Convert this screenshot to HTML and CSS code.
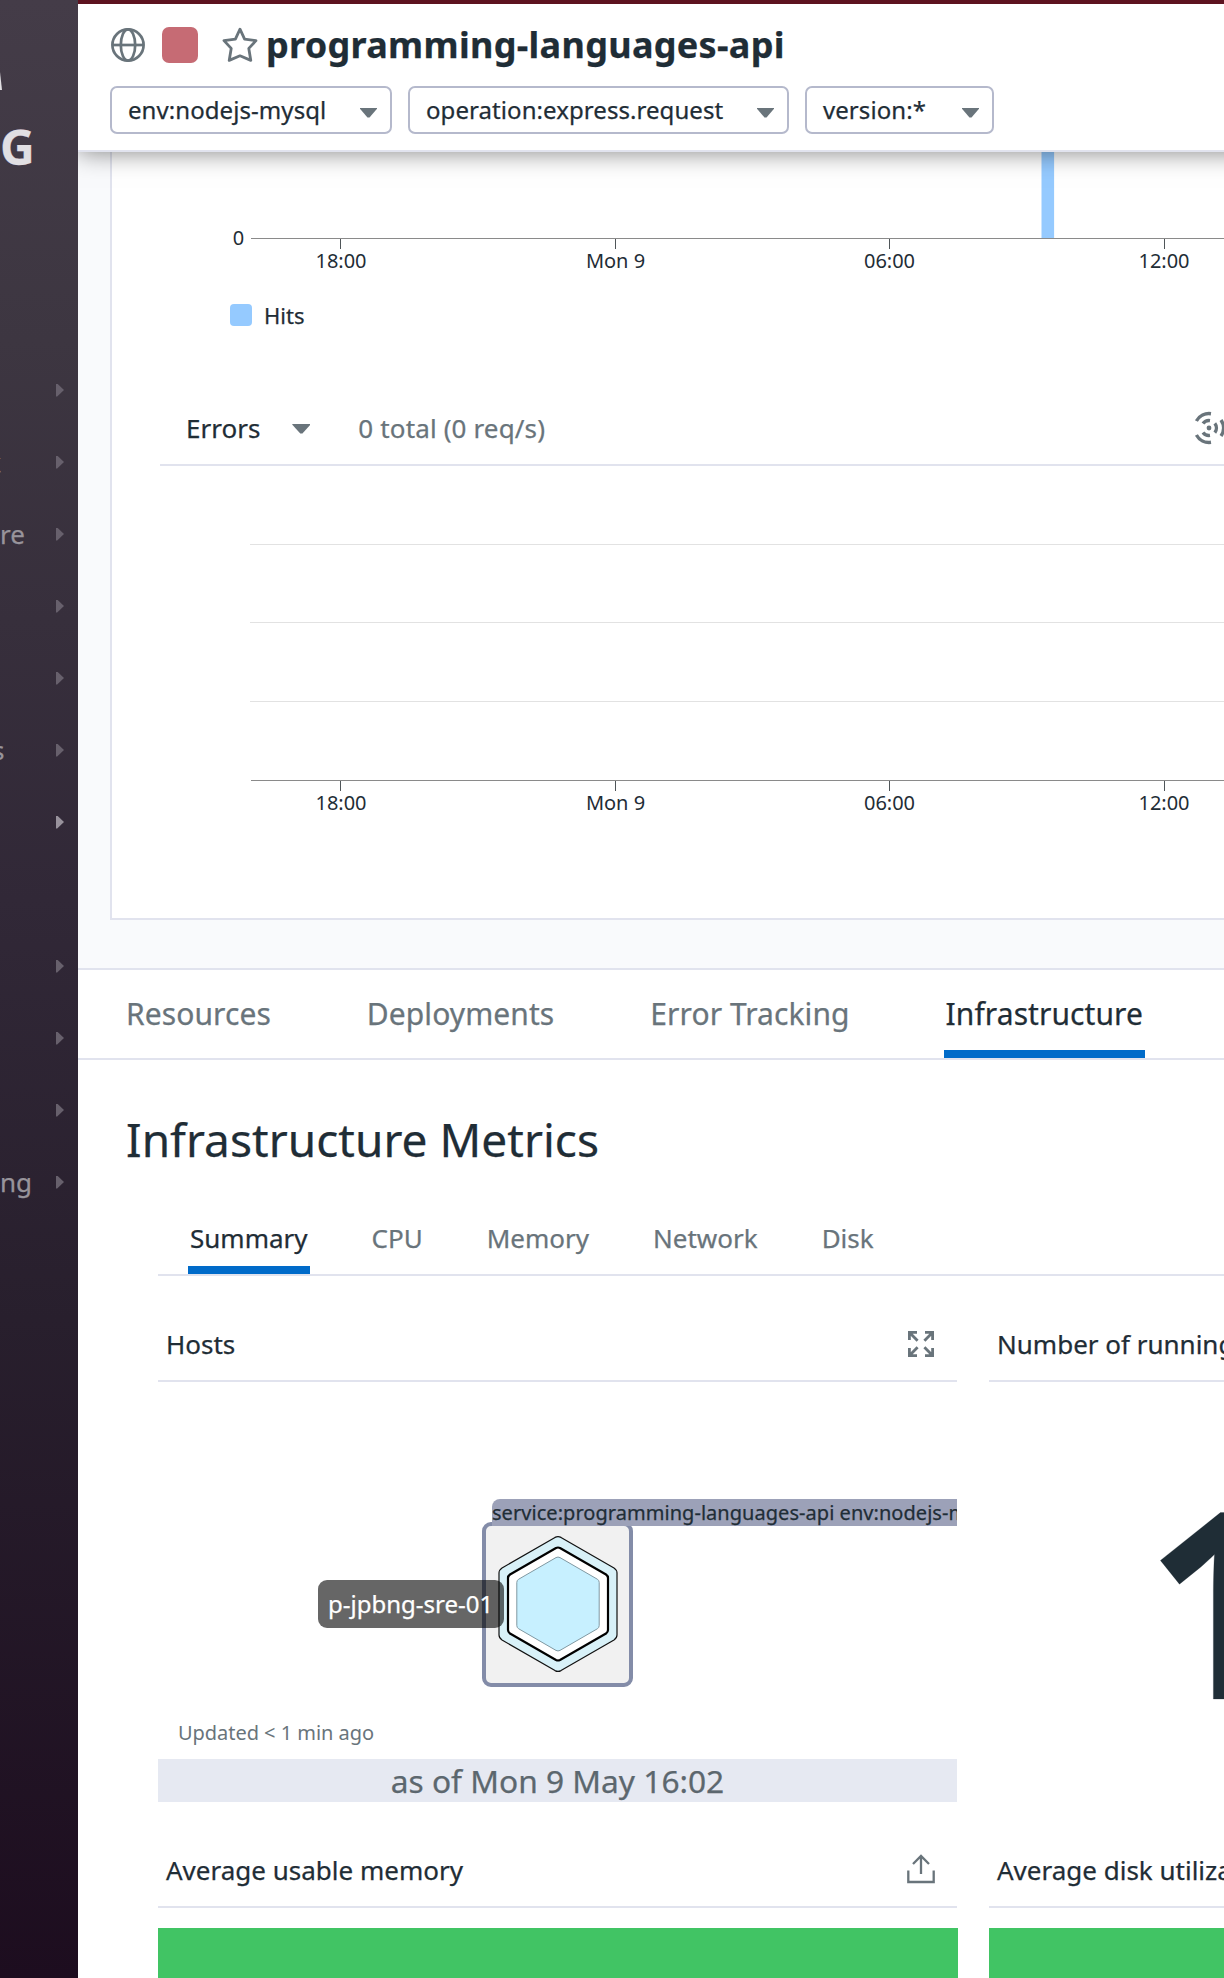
FILE: index.html
```html
<!DOCTYPE html>
<html lang="en">
<head>
<meta charset="utf-8">
<title>programming-languages-api</title>
<link rel="stylesheet" href="styles.css">
</head>
<body>
<div class="app">
  <aside class="sidebar">
    <div class="brand">
      <svg class="brand-mark" width="3" height="18" viewBox="0 0 3 18"><path d="M0 0 L2 18 H0 Z" fill="#e1dfe3"/></svg>
      <span class="brand-name">G</span>
    </div>
    <nav class="nav">
      <div class="nav-item"><i class="arrow"></i></div>
      <div class="nav-item"><span class="nav-label cut-k">k</span><i class="arrow"></i></div>
      <div class="nav-item"><span class="nav-label">re</span><i class="arrow"></i></div>
      <div class="nav-item"><i class="arrow"></i></div>
      <div class="nav-item"><i class="arrow"></i></div>
      <div class="nav-item"><span class="nav-label cut-s">s</span><i class="arrow"></i></div>
      <div class="nav-item current"><i class="arrow"></i></div>
      <div class="nav-item"></div>
      <div class="nav-item"><i class="arrow"></i></div>
      <div class="nav-item"><i class="arrow"></i></div>
      <div class="nav-item"><i class="arrow"></i></div>
      <div class="nav-item"><span class="nav-label">ng</span><i class="arrow"></i></div>
    </nav>
  </aside>

  <main class="main">
    <header class="header">
      <div class="title-row">
        <svg class="globe" width="34" height="34" viewBox="0 0 34 34" fill="none" stroke="#69747b" stroke-width="2.7"><circle cx="17" cy="17" r="15.6"/><ellipse cx="17" cy="17" rx="7.200" ry="15.6"/><path d="M1.200 17H32.800"/></svg>
        <span class="service-color"></span>
        <svg class="star" width="36" height="36" viewBox="0 0 36 36" fill="none" stroke="#69747b" stroke-width="2.8" stroke-linejoin="round"><path d="M18 2.200 L22.600 12.200 L34 13.600 L26.800 21.400 L28.800 33.400 L18 28.800 L7.200 33.400 L9.200 21.400 L2 13.600 L13.400 12.200 Z"/></svg>
        <h1 class="title">programming-languages-api</h1>
      </div>
      <div class="filters">
        <div class="select env">env:nodejs-mysql<i class="caret"></i></div>
        <div class="select operation">operation:express.request<i class="caret"></i></div>
        <div class="select version">version:*<i class="caret"></i></div>
      </div>
    </header>

    <section class="overview">
      <div class="card">
        <svg class="hits-chart" width="1112" height="130" viewBox="112 152 1112 130">
          <rect x="1041.500" y="152" width="12.600" height="86" fill="#95caff"/>
          <path d="M251 238.500H1224" stroke="#8a8a8a"/>
          <path d="M340.500 239V249M615.500 239V249M889.500 239V249M1164.500 239V249" stroke="#4f5559"/>
          <g class="axis">
            <text x="238.500" y="245">0</text>
            <text x="341" y="268">18:00</text><text x="615.500" y="268">Mon 9</text><text x="889.500" y="268">06:00</text><text x="1164" y="268">12:00</text>
          </g>
        </svg>
        <div class="legend"><span class="swatch"></span>Hits</div>
        <div class="chart-head">
          <span class="metric">Errors</span><i class="caret"></i><span class="total">0 total (0 req/s)</span>
          <svg class="signal" width="36" height="36" viewBox="-18 -18 36 36" fill="none" stroke="#69747b" stroke-width="3.400"><circle r="2.400" fill="#69747b" stroke="none"/><path d="M2 -14.300A14.400 14.400 0 0 0 -12.600 -7M2 14.300A14.400 14.400 0 0 1 -12.600 7M12 -8A14.400 14.400 0 0 1 12 8M1 -7.400A7.400 7.400 0 0 0 -6 -4.400M1 7.400A7.400 7.400 0 0 1 -6 4.400M5.800 -4.600A7.400 7.400 0 0 1 5.800 4.600"/></svg>
        </div>
        <svg class="errors-chart" width="1112" height="360" viewBox="112 466 1112 360">
          <path d="M250 544.500H1224M250 622.500H1224M250 701.500H1224" stroke="#e2e2e2"/>
          <path d="M251 780.500H1224" stroke="#8a8a8a"/>
          <path d="M340.500 781V791M615.500 781V791M889.500 781V791M1164.500 781V791" stroke="#4f5559"/>
          <g class="axis"><text x="341" y="810">18:00</text><text x="615.500" y="810">Mon 9</text><text x="889.500" y="810">06:00</text><text x="1164" y="810">12:00</text></g>
        </svg>
      </div>
    </section>

    <nav class="tabs">
      <span class="tab">Resources</span><span class="tab">Deployments</span><span class="tab">Error Tracking</span><span class="tab active">Infrastructure</span>
    </nav>

    <section class="infra">
      <h2 class="infra-title">Infrastructure Metrics</h2>
      <nav class="subtabs">
        <span class="tab active">Summary</span><span class="tab">CPU</span><span class="tab">Memory</span><span class="tab">Network</span><span class="tab">Disk</span>
      </nav>
      <div class="widgets">
        <div class="widget">
          <div class="widget-head">Hosts
            <svg width="26" height="26" viewBox="0 0 26 26" fill="none" stroke="#69747b" stroke-width="2.800"><path d="M1.400 9V1.400H9M17 1.400h7.600V9M24.600 17v7.600H17M9 24.600H1.400V17M2 2l7.600 7.800M24 2l-7.600 7.800M24 24l-7.600-7.800M2 24l7.600-7.800"/></svg>
          </div>
          <div class="hostmap">
            <div class="host-group">
              <svg width="120" height="138" viewBox="0 0 120 138" stroke-linejoin="round">
                <path d="M57 2.400Q60 .8 63 2.400L116 33Q119 35 119 38V100Q119 103 116 105L63 135.600Q60 137.200 57 135.600L4 105Q1 103 1 100V38Q1 35 4 33Z" fill="#d8f1f8" stroke="#111" stroke-width="1.200"/>
                <path d="M58 13Q60 12 62 13L108 39.500Q110 41 110 43V95Q110 97 108 98.500L62 125Q60 126 58 125L12 98.500Q10 97 10 95V43Q10 41 12 39.500Z" fill="#fff" stroke="#000" stroke-width="2.200"/>
                <path d="M58 22.600Q60 21.500 62 22.600L99.500 44.300Q101.200 45.500 101.200 47.500V90.500Q101.200 92.500 99.500 93.700L62 115.400Q60 116.500 58 115.400L20.500 93.700Q18.800 92.500 18.800 90.500V47.500Q18.800 45.500 20.500 44.300Z" fill="#c7f0ff" stroke="#8199a2"/>
              </svg>
            </div>
            <div class="group-label">service:programming-languages-api env:nodejs-mysql</div>
            <div class="host-name">p-jpbng-sre-01</div>
          </div>
          <div class="updated">Updated &lt; 1 min ago</div>
          <div class="as-of">as of Mon 9 May 16:02</div>
        </div>
        <div class="widget">
          <div class="widget-head">Number of running</div>
          <div class="big-value">1</div>
        </div>
        <div class="widget">
          <div class="widget-head">Average usable memory
            <svg class="share" width="28" height="30" viewBox="0 0 28 30" fill="none" stroke="#69747b" stroke-width="2.300"><path d="M1.300 16.500V28H26.700V16.500M14 20V2M6 10L14 2L22 10"/></svg>
          </div>
          <div class="value-block"></div>
        </div>
        <div class="widget">
          <div class="widget-head">Average disk utilization</div>
          <div class="value-block"></div>
        </div>
      </div>
    </section>
  </main>
</div>
</body>
</html>
```

FILE: styles.css
```css
* { box-sizing: border-box; }
body {
  margin: 0;
  font-family: "Noto Sans", sans-serif;
  color: #1f2d36;
  background: #fff;
  overflow: hidden;
  -webkit-text-stroke: .25px;
}
svg { display: block; flex: none; }
h1, h2 { margin: 0; }
.app { display: flex; width: 1224px; height: 1978px; overflow: hidden; }

/* Sidebar */
.sidebar {
  flex: none;
  width: 78px;
  overflow: hidden;
  background: linear-gradient(#443c48 0, #3d3641 340px, #312837 900px, #281f2d 1320px, #1d0d1f 1978px);
}
.brand { height: 354px; padding-top: 72px; }
.brand-name {
  display: block;
  margin: 25px 0 0;
  font-size: 48px;
  font-weight: 700;
  line-height: 64px;
  color: #e1dfe3;
}
.nav-item {
  display: flex;
  align-items: center;
  height: 72px;
  padding-right: 14px;
  font-size: 26px;
  line-height: 36px;
  color: #98949b;
}
.arrow {
  width: 8px;
  height: 13px;
  margin-left: auto;
  background: #67606c;
  clip-path: polygon(0 0, 15% 0, 100% 50%, 15% 100%, 0 100%);
}
.current .arrow { background: #98929c; }
.cut-k { margin-left: -13px; }
.cut-s { margin-left: -8px; }

/* Header */
.main { flex: 1; min-width: 0; overflow: hidden; }
.header {
  position: relative;
  z-index: 2;
  width: 1180px;
  height: 152px;
  padding: 16px 0 0 32px;
  border-top: 4px solid #5d1320;
  border-bottom: 2px solid #e1e3ee;
  background: #fff;
  box-shadow: 0 0 24px rgba(0, 0, 0, .5);
}
.title-row { display: flex; align-items: center; height: 50px; padding-left: 1px; }
.service-color { width: 36px; height: 36px; margin: 0 24px 0 17px; border-radius: 7px; background: #c66b74; }
.title { margin: 0 0 0 8px; font-size: 36px; line-height: 48px; font-weight: 700; letter-spacing: .3px; }
.filters { display: flex; gap: 16px; margin-top: 16px; }
.select {
  display: flex;
  align-items: center;
  justify-content: space-between;
  height: 48px;
  padding: 0 13px 0 16px;
  border: 2px solid #b5b9cc;
  border-radius: 7px;
  font-size: 24px;
  line-height: 34px;
  letter-spacing: .07px;
}
.env { width: 282px; }
.operation { width: 381px; }
.version { width: 189px; }
.caret {
  width: 17px;
  height: 10px;
  background: #69747b;
  clip-path: polygon(0 0, 100% 0, 100% 12%, 56% 100%, 44% 100%, 0 12%);
}
.select .caret { margin-top: 5px; }

/* Traffic charts */
.overview { height: 816px; padding-left: 32px; background: #f9fafc; }
.card { height: 768px; border: solid #e1e3ee; border-width: 0 0 2px 2px; background: #fff; }
.axis { font-size: 20px; fill: #1f2d36; text-anchor: middle; }
.legend {
  display: flex;
  align-items: center;
  gap: 12px;
  height: 36px;
  margin-top: 15px;
  padding-left: 118px;
  font-size: 22px;
  line-height: 30px;
}
.swatch { width: 22px; height: 22px; border-radius: 4px; background: #95caff; }
.chart-head {
  display: flex;
  align-items: center;
  height: 76px;
  margin: 57px 0 0 48px;
  padding: 2px 0 0 26px;
  border-bottom: 2px solid #e1e3ee;
  font-size: 26px;
  line-height: 36px;
}
.chart-head .caret { width: 18px; margin: 1px 48px 0 32px; }
.total { color: #69747b; letter-spacing: .14px; }
.signal { margin: 0 -3px 0 auto; }

/* Tabs */
.tabs {
  display: flex;
  gap: 92px;
  height: 92px;
  padding-left: 46px;
  border: solid #e1e3ee;
  border-width: 2px 0;
  font-size: 30px;
  line-height: 88px;
  letter-spacing: .08px;
}
.tab { padding: 0 2px; color: #69747b; }
.tab.active { border-bottom: 8px solid #006bc9; color: #1f2d36; }

/* Infrastructure metrics */
.infra-title { margin: 47px 0 0 48px; font-size: 46px; line-height: 64px; font-weight: 400; letter-spacing: .04px; }
.subtabs {
  display: flex;
  gap: 60px;
  height: 74px;
  margin: 31px 0 0 80px;
  padding-left: 30px;
  border-bottom: 2px solid #e1e3ee;
  font-size: 26px;
  line-height: 73px;
}
.widgets {
  display: grid;
  grid-template-columns: 799px 799px;
  grid-template-rows: 526px 176px;
  column-gap: 32px;
  padding-left: 80px;
}
.widget-head {
  display: flex;
  align-items: center;
  justify-content: space-between;
  height: 106px;
  padding: 32px 23px 0 8px;
  border-bottom: 2px solid #e1e3ee;
  font-size: 26px;
  line-height: 36px;
  white-space: nowrap;
}
.share { margin: -2px -1px 0 0; }
.hostmap { position: relative; height: 337px; overflow: hidden; }
.host-group {
  position: absolute;
  left: 324px;
  top: 140px;
  width: 151px;
  height: 165px;
  padding: 9px 11px 0 11.500px;
  border: 4px solid #838ca8;
  border-radius: 9px;
  background: #f1f1f1;
}
.group-label {
  position: absolute;
  left: 334px;
  top: 117px;
  height: 27px;
  width: 600px;
  border-radius: 8px 0 0 0;
  background: #9ca1b8;
  font-size: 20px;
  line-height: 27px;
  letter-spacing: .045px;
  white-space: nowrap;
}
.host-name {
  position: absolute;
  left: 160px;
  top: 198px;
  width: 186px;
  height: 48px;
  padding-left: 10px;
  border-radius: 9px;
  background: rgba(0, 0, 0, .6);
  color: #fff;
  font-size: 24px;
  line-height: 48px;
}
.updated { height: 40px; padding-left: 20px; color: #69747b; font-size: 20px; line-height: 27px; -webkit-text-stroke: 0; letter-spacing: -.04px; }
.as-of { height: 43px; background: #e6e9f2; color: #5c676e; font-size: 31.7px; line-height: 43px; text-align: center; }
.big-value { padding-left: 156px; font-size: 261px; line-height: 432px; font-weight: 700; }
.value-block { width: 800px; height: 60px; margin-top: 20px; background: #41c464; }
```
